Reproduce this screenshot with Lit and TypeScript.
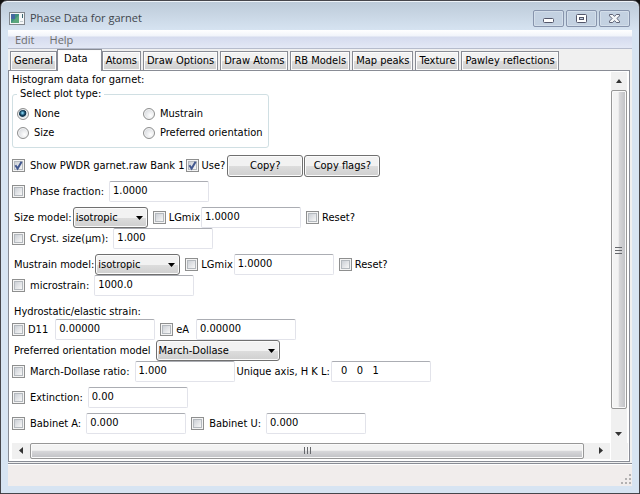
import { LitElement, html, css, svg } from "lit";
import { customElement, property, state } from "lit/decorators.js";
import { classMap } from "lit/directives/class-map.js";

@customElement("check-box")
class CheckBox extends LitElement {
  @property({ type: Boolean }) checked = false;
  @property({ type: Boolean }) tight = false;
  @property() label = "";

  static styles = css`
    :host { display: block; }
    label { display: flex; align-items: center; gap: 5px; white-space: nowrap; }
    .tight { gap: 3px; }
    input {
      appearance: none;
      box-sizing: border-box;
      width: 13px;
      height: 13px;
      margin: 0;
      flex: none;
      border: 1px solid #8e8f8f;
      box-shadow: inset 0 0 0 1px #f4f4f4, inset 0 0 0 2px #b4b9be;
      background: linear-gradient(135deg, #cdd1d7 20%, #f6f6f6 80%);
    }
    .box { display: grid; }
    .box > * { grid-area: 1 / 1; }
    svg { width: 13px; height: 13px; pointer-events: none; }
  `;

  render() {
    return html`<label class=${classMap({ tight: this.tight })}>
      <span class="box">
        <input type="checkbox" .checked=${this.checked}
          @change=${(e: Event) => (this.checked = (e.target as HTMLInputElement).checked)} />
        ${this.checked
          ? html`<svg viewBox="0 0 13 13"><path d="M3.4 6.2 L5.6 9.6 L9.6 2.8" fill="none" stroke="#42588f" stroke-width="2"/></svg>`
          : ""}
      </span>
      <span>${this.label}</span>
    </label>`;
  }
}

interface Tab { name: string }
const TABS: Tab[] = [
  "General", "Data", "Atoms", "Draw Options", "Draw Atoms",
  "RB Models", "Map peaks", "Texture", "Pawley reflections",
].map((name) => ({ name }));

const arrow = (d: string) => svg`<path d=${d} fill="#333"/>`;

@customElement("app-root")
class AppRoot extends LitElement {
  @state() private tab = "Data";
  @state() private plot = "None";

  static styles = css`
    :host {
      display: block;
      background: #101010;
      font: 11px/14px "DejaVu Sans Condensed", "DejaVu Sans", sans-serif;
      color: #000;
    }
    * { box-sizing: border-box; }
    button, input, select { font: inherit; color: inherit; margin: 0; }
    .window {
      display: flex;
      flex-direction: column;
      min-height: 100vh;
      padding: 0 7px 7px;
      border: 1px solid #46464b;
      border-radius: 7px 7px 0 0;
      background: linear-gradient(#bccad8, #d7e4f2 30px);
      box-shadow: inset 0 1px #eef3f8;
    }
    .title {
      display: flex;
      align-items: center;
      gap: 5px;
      height: 29px;
      padding: 5px 2px 0 1px;
      font: 11px/16px "Open Sans", "Noto Sans", sans-serif;
      color: #41464d;
    }
    .title h1 { flex: 1; margin: 0; font: inherit; }
    .logo { width: 16px; height: 13px; }
    .controls { display: flex; gap: 2px; }
    .controls button {
      display: grid;
      place-items: center;
      width: 31px;
      height: 17px;
      padding: 0;
      border: 1px solid #8794ac;
      border-radius: 2px;
      background: #c3d1e1;
      box-shadow: inset 0 0 0 1px #d3deea;
    }
    .controls svg { width: 15px; height: 11px; }
    .menu {
      display: flex;
      height: 19px;
      border-bottom: 1px solid #b6bccc;
      background: linear-gradient(#fff, #f1f4fa 6px, #d5dbee 7px, #e3e8f5);
      font: 11px/19px "Open Sans", "Noto Sans", sans-serif;
    }
    .menu button { padding: 0 8px 0 7px; border: 0; background: none; color: #6d6d6d; }
    .client { display: flex; flex-direction: column; flex: 1; background: #f0f0f0; }
    .tabs { display: flex; align-items: flex-end; gap: 2px; height: 21px; padding-left: 2px; }
    .tabs button {
      height: 19px;
      padding: 0 3px;
      border: 1px solid #898c95;
      border-bottom: 0;
      box-shadow: inset 0 0 0 1px #fcfcfc;
      background: linear-gradient(#f2f2f2 50%, #dcdcdc 51%, #cfcfcf);
      white-space: nowrap;
    }
    .tabs button.on {
      height: 22px;
      margin: 0 -2px -1px;
      padding: 0 13px 4px 6px;
      background: #fff;
      z-index: 1;
    }
    .panel {
      display: grid;
      grid-template-columns: 1fr 17px;
      grid-template-rows: 1fr 17px;
      flex: 1;
      margin-right: 2px;
      padding: 1px 1px 1px 2px;
      border: 1px solid #898c95;
      background: #fff;
    }
    .content { display: flex; flex-direction: column; gap: 5px; padding: 1px 1px 8px; }
    .heading { margin: 0; font: inherit; }
    fieldset {
      display: grid;
      grid-template-columns: 126px 1fr;
      row-gap: 5px;
      width: 257px;
      margin: -5px 0 2px;
      padding: 6px 4px 7px;
      border: 1px solid #d0dfe3;
      border-radius: 3px;
    }
    legend { height: 14px; padding: 0 3px; }
    .radio { display: flex; align-items: center; gap: 5px; white-space: nowrap; }
    .radio input {
      appearance: none;
      width: 12px;
      height: 12px;
      border: 1px solid #8e8f8f;
      border-radius: 50%;
      background: radial-gradient(circle at 65% 65%, #fff, #d0d3d8 90%);
      box-shadow: inset 0 0 0 1px #f4f4f4;
    }
    .radio input:checked { background: radial-gradient(circle at 45% 40%, #7fd0f2 5%, #12425f 30%, #10344c 42%, #dfe5ea 52%); }
    .row { display: flex; align-items: center; height: 21px; }
    .stack { display: flex; flex-direction: column; }
    .plain { padding-left: 2px; white-space: nowrap; }
    .field { display: flex; align-items: center; gap: 5px; white-space: nowrap; margin-right: 5px; }
    .near { gap: 1px; }
    .far { gap: 7px; }
    .joined { margin-right: 2px; }
    .text {
      width: 100px;
      height: 21px;
      padding: 0 3px 2px;
      border: 1px solid #e2e3ea;
      border-top-color: #abadb3;
      border-radius: 2px;
      background: #fff;
    }
    .push {
      width: 76px;
      height: 22px;
      padding: 0;
      margin-right: 1px;
      border: 1px solid #707070;
      border-radius: 3px;
      box-shadow: inset 0 0 0 1px #fbfbfb;
      background: linear-gradient(#f2f2f2 50%, #dddddd 51%, #cfcfcf);
    }
    .pick { display: grid; align-items: center; justify-items: end; }
    .pick > * { grid-area: 1 / 1; }
    .pick select {
      appearance: none;
      width: 75px;
      height: 21px;
      padding: 0 2px;
      border: 1px solid #707070;
      border-radius: 3px;
      box-shadow: inset 0 0 0 1px #fbfbfb;
      background: linear-gradient(#f2f2f2 50%, #dddddd 51%, #cfcfcf);
    }
    .pick .medium { width: 85px; }
    .pick .wide { width: 124px; }
    .pick svg { width: 7px; height: 4px; margin-right: 5px; pointer-events: none; }
    .strain { padding: 4px 0 0 2px; }
    .vbar, .hbar { display: flex; background: #f0f0f0; }
    .vbar { flex-direction: column; width: 16px; }
    .hbar { margin: 0 1px; height: 16px; }
    .cap { display: grid; place-items: center; width: 18px; height: 16px; padding: 0; border: 0; background: none; }
    .vbar .cap { width: 16px; height: 18px; }
    .cap svg { width: 8px; height: 8px; }
    .thumb { display: grid; place-items: center; border: 1px solid #979797; border-radius: 2px; box-shadow: inset 0 0 0 1px #fafafa; }
    .vbar .thumb { flex: 317; background: linear-gradient(90deg, #f3f3f3 45%, #d8d8da 50%, #bfc0c4); }
    .hbar .thumb { flex: 554; background: linear-gradient(#f3f3f3 45%, #d8d8da 50%, #bfc0c4); }
    .vbar .rest { flex: 16; }
    .hbar .rest { flex: 8; }
    .thumb svg { width: 8px; height: 8px; }
    .corner { background: #f0f0f0; }
    .status {
      display: flex;
      align-items: flex-end;
      justify-content: flex-end;
      height: 23px;
      margin-top: 1px;
      padding: 2px 1px;
      border-top: 1px solid #898c95;
      box-shadow: inset 0 1px #fff;
      background: #f1edec;
    }
    .status svg { width: 10px; height: 10px; }
  `;

  // A tick box whose caption also names the text box after it.
  private entry(label: string, value: string, tight = false, spacing = "") {
    return html`<div class="field ${spacing}">
      <check-box label=${label} ?tight=${tight}></check-box>
      <input class="text" type="text" aria-label=${label} .value=${value} />
    </div>`;
  }

  private pick(label: string, option: string, size = "") {
    return html`<label class="field plain ${size === "wide" ? "" : "near"}">${label}
      <span class="pick"><select class=${size}><option>${option}</option></select>
      <svg viewBox="0 0 7 4"><path d="M0 0H7L3.5 4Z"/></svg></span></label>`;
  }

  private radio(name: string) {
    return html`<label class="radio"><input type="radio" name="plot"
      .checked=${this.plot === name} @change=${() => (this.plot = name)} />${name}</label>`;
  }

  render() {
    return html`
      <div class="window">
        <header class="title">
          <svg class="logo" viewBox="0 0 16 13">
            <rect x=".5" y=".5" width="15" height="12" fill="#f5f7f8" stroke="#80868c"/>
            <rect x="2" y="2" width="8" height="9" fill="#3f8f80"/>
            <rect x="2" y="2" width="4" height="5" fill="#4468a0"/>
            <path d="M10 3V11H2Z" fill="#68b07a" opacity=".7"/>
            <rect x="13" y="2" width="1" height="4" fill="#3b6670"/>
            <rect x="11" y="9" width="3" height="1" fill="#c3ccd0"/>
          </svg>
          <h1>Phase Data for garnet</h1>
          <div class="controls">
            <button aria-label="Minimize"><svg viewBox="0 0 15 11"><rect x="2.5" y="5.5" width="10" height="4" rx="1" fill="#fff" stroke="#53566a"/></svg></button>
            <button aria-label="Maximize"><svg viewBox="0 0 15 11"><rect x="2.5" y="1.5" width="10" height="8" rx="1" fill="#fff" stroke="#53566a"/><rect x="5.5" y="4.5" width="4" height="2" fill="#c3d1e1" stroke="#53566a"/></svg></button>
            <button aria-label="Close"><svg viewBox="0 0 15 11"><path d="M2.5 1.5H5.7L7.5 3.4L9.3 1.5H12.5V2.9L9.9 5.5L12.5 8.1V9.5H9.3L7.5 7.6L5.7 9.5H2.5V8.1L5.1 5.5L2.5 2.9Z" fill="#f4f6f8" stroke="#5e6275"/></svg></button>
          </div>
        </header>
        <nav class="menu"><button>Edit</button><button>Help</button></nav>
        <div class="client">
          <div class="tabs" role="tablist">
            ${TABS.map(({ name }) => html`<button role="tab" aria-selected=${this.tab === name}
              class=${classMap({ on: this.tab === name })} @click=${() => (this.tab = name)}>${name}</button>`)}
          </div>
          <main class="panel">
            <div class="content">
              <h2 class="heading">Histogram data for garnet:</h2>
              <fieldset>
                <legend>Select plot type:</legend>
                ${["None", "Mustrain", "Size", "Preferred orientation"].map((n) => this.radio(n))}
              </fieldset>
              <div class="row">
                <div class="field near joined">
                  <check-box checked label="Show PWDR garnet.raw Bank 1"></check-box>
                  <check-box checked tight label="Use?"></check-box>
                </div>
                <button class="push">Copy?</button><button class="push">Copy flags?</button>
              </div>
              <div class="row">${this.entry("Phase fraction:", "1.0000")}</div>
              <div class="stack">
                <div class="row">
                  ${this.pick("Size model:", "isotropic")}
                  ${this.entry("LGmix", "1.0000", true, "near")}
                  <check-box tight label="Reset?"></check-box>
                </div>
                <div class="row">${this.entry("Cryst. size(μm):", "1.000")}</div>
              </div>
              <div class="stack">
                <div class="row">
                  ${this.pick("Mustrain model:", "isotropic", "medium")}
                  ${this.entry("LGmix", "1.0000", true, "near")}
                  <check-box tight label="Reset?"></check-box>
                </div>
                <div class="row">${this.entry("microstrain:", "1000.0")}</div>
              </div>
              <div class="stack">
                <h3 class="heading strain">Hydrostatic/elastic strain:</h3>
                <div class="row">
                  ${this.entry("D11", "0.00000", true, "far")}
                  ${this.entry("eA", "0.00000", true, "far")}
                </div>
                <div class="row">${this.pick("Preferred orientation model", "March-Dollase", "wide")}</div>
                <div class="row">
                  ${this.entry("March-Dollase ratio:", "1.000", false, "joined")}
                  <label class="field near">Unique axis, H K L:
                    <input class="text" type="text" .value=${"  0   0   1"} /></label>
                </div>
              </div>
              <div class="row">${this.entry("Extinction:", "0.00")}</div>
              <div class="row">
                ${this.entry("Babinet A:", "0.000")}
                ${this.entry("Babinet U:", "0.000")}
              </div>
            </div>
            <div class="vbar">
              <button class="cap" aria-label="Scroll up"><svg viewBox="0 0 8 8">${arrow("M1 6L4 2L7 6Z")}</svg></button>
              <div class="thumb"><svg viewBox="0 0 8 8"><path d="M0 1.5H7M0 4.5H7M0 7.5H7" stroke="#66686c"/></svg></div>
              <div class="rest"></div>
              <button class="cap" aria-label="Scroll down"><svg viewBox="0 0 8 8">${arrow("M0 2H7L3.5 6Z")}</svg></button>
            </div>
            <div class="hbar">
              <button class="cap" aria-label="Scroll left"><svg viewBox="0 0 8 8">${arrow("M6 0V7L2 3.5Z")}</svg></button>
              <div class="thumb"><svg viewBox="0 0 8 8"><path d="M1.5 0V7M4.5 0V7M7.5 0V7" stroke="#66686c"/></svg></div>
              <div class="rest"></div>
              <button class="cap" aria-label="Scroll right"><svg viewBox="0 0 8 8">${arrow("M2 0V7L6 3.5Z")}</svg></button>
            </div>
            <div class="corner"></div>
          </main>
          <footer class="status">
            <svg viewBox="0 0 10 10" fill="#b3b1b1"><path d="M8 0h2v2h-2zM4 4h2v2h-2zM8 4h2v2h-2zM0 8h2v2h-2zM4 8h2v2h-2zM8 8h2v2h-2z"/></svg>
          </footer>
        </div>
      </div>`;
  }
}
